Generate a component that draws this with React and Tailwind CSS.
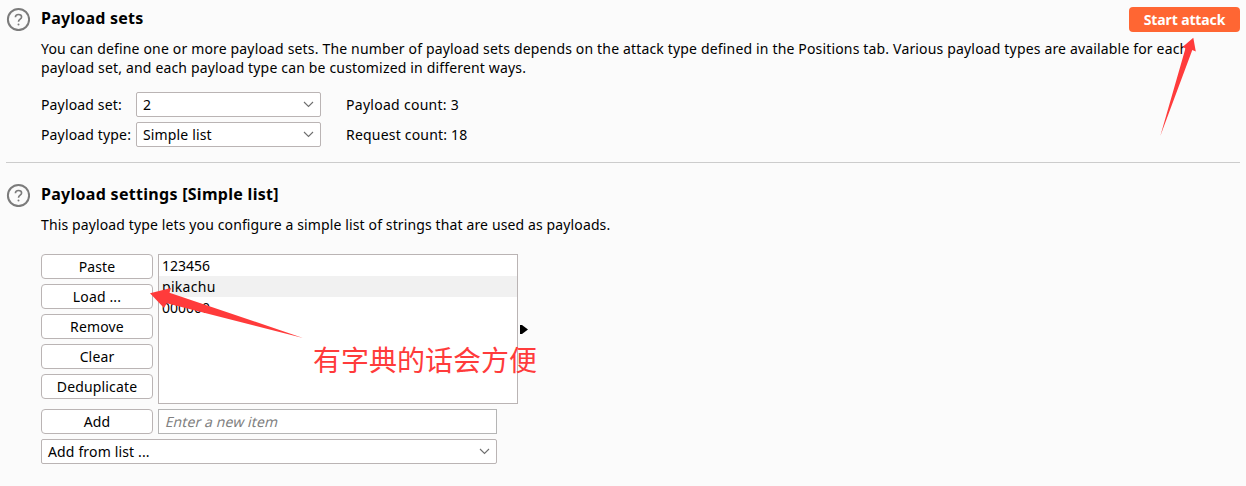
import React from "react";

function HelpIcon() {
  return (
    <svg className="block h-6 w-6 shrink-0" viewBox="0 0 24 24" fill="none">
      <circle cx="12.5" cy="12.5" r="10.6" stroke="#7b7b7b" strokeWidth="2" />
      <path
        d="M9.4 10.2C9.4 8.5 10.7 7.5 12.5 7.5C14.3 7.5 15.6 8.5 15.6 10C15.6 12.2 12.5 12.2 12.5 14.8"
        stroke="#7b7b7b"
        strokeWidth="1.6"
      />
      <circle cx="12.5" cy="17.5" r="1" fill="#7b7b7b" />
    </svg>
  );
}

function Select({ children, className }) {
  return (
    <button
      className={`flex h-[25px] items-center justify-between rounded-[2px] border border-[#bab4b4] bg-white pr-[6px] pl-[6px] ${className}`}
    >
      <span>{children}</span>
      <svg className="h-[7px] w-[11px]" viewBox="0 0 11 7" fill="none">
        <path d="M1 1L5.5 5.5L10 1" stroke="#6e6e6e" strokeWidth="1.1" />
      </svg>
    </button>
  );
}

function Button({ children, className = "" }) {
  return (
    <button
      className={`flex h-[25px] w-[112px] items-center justify-center rounded-[4px] border border-[#bab4b4] bg-white ${className}`}
    >
      {children}
    </button>
  );
}

function Heading({ children, className }) {
  return <h2 className={`text-[16px] leading-[22px] font-bold whitespace-nowrap ${className}`}>{children}</h2>;
}

export default function App() {
  return (
    <main className="relative h-[486px] w-[1246px] overflow-hidden bg-[#fbfbfb] px-[6px] pt-[7px] font-['Noto_Sans','Noto_Sans_CJK_SC',sans-serif] text-[14px] leading-[19px] tracking-[0.15px] whitespace-nowrap text-black">
      <section className="flex h-[156px] border-b border-[#cccccc] pb-[14px]">
        <HelpIcon />
        <div className="ml-[11px] flex-1">
          <div className="flex h-[25px] justify-between">
            <Heading className="tracking-[0.22px]"><span>Payload sets</span></Heading>
            <button className="h-[25px] w-[111px] rounded-[4px] bg-[#ff6633] font-bold tracking-[-0.12px] text-white">
              <span>Start attack</span>
            </button>
          </div>
          <p className="mt-[7px] tracking-[0.165px]">
            <span>You can define one or more payload sets. The number of payload sets depends on the attack type defined in the Positions tab. Various payload types are available for each</span>
            <br />
            <span>payload set, and each payload type can be customized in different ways.</span>
          </p>
          <div className="mt-[15px] grid grid-cols-[95px_210px_auto] items-center justify-start gap-y-[5px] tracking-[0.15px]">
            <span>Payload set:</span>
            <Select className="w-[185px]">2</Select>
            <span className="tracking-[0.28px]">Payload count: 3</span>
            <span>Payload type:</span>
            <Select className="w-[185px]">Simple list</Select>
            <span className="tracking-[0.2px]">Request count: 18</span>
          </div>
        </div>
      </section>

      <section className="flex pt-[20px]">
        <HelpIcon />
        <div className="ml-[11px]">
          <Heading className="tracking-[0.29px]"><span>Payload settings [Simple list]</span></Heading>
          <p className="mt-[10px] tracking-[0.125px]">
            <span>This payload type lets you configure a simple list of strings that are used as payloads.</span>
          </p>
          <div className="mt-[20px] flex gap-[5px]">
            <div className="flex flex-col gap-[5px]">
              <Button>Paste</Button>
              <Button>Load ...</Button>
              <Button>Remove</Button>
              <Button>Clear</Button>
              <Button>Deduplicate</Button>
            </div>
            <div className="h-[150px] w-[360px] border border-[#bab4b4] bg-white leading-[21px]">
              <div className="h-[21px] pl-[3px] tracking-normal">123456</div>
              <div className="h-[21px] bg-[#f1f1f1] pl-[3px] tracking-[0.3px]">pikachu</div>
              <div className="h-[21px] pl-[3px] tracking-normal">000000</div>
            </div>
            <svg className="-ml-[3px] mt-[71px] h-[9px] w-2" viewBox="0 0 8 9">
              <path d="M0 0H2L8 4.5L2 9H0Z" fill="#000" />
            </svg>
          </div>
          <div className="mt-[5px] flex gap-[5px]">
            <Button>Add</Button>
            <div className="flex h-[25px] w-[339px] items-center border border-[#b5b5b5] bg-white pl-[7px] tracking-[0.1px] text-[#808080]">
              <span className="inline-block skew-x-[-14deg]">Enter a new item</span>
            </div>
          </div>
          <Select className="mt-[5px] w-[456px]">Add from list ...</Select>
        </div>
      </section>

      <svg className="pointer-events-none absolute inset-0 h-[486px] w-[1246px]" viewBox="0 0 1246 486">
        <path d="M1193.3 37.8L1195.8 51.5L1192.3 50L1160.3 136L1185.5 48.2L1182.5 47Z" fill="#ff3b3b" />
        <path d="M150 293.3L171 288L169.5 292.7L303 338L166.8 303.3L164 308Z" fill="#ff3b3b" />
      </svg>
      <div className="absolute top-[339px] left-[313px] font-['Noto_Sans_CJK_SC',sans-serif] text-[28px] leading-[40px] tracking-normal text-[#ff3b3b]">
        有字典的话会方便
      </div>
    </main>
  );
}
